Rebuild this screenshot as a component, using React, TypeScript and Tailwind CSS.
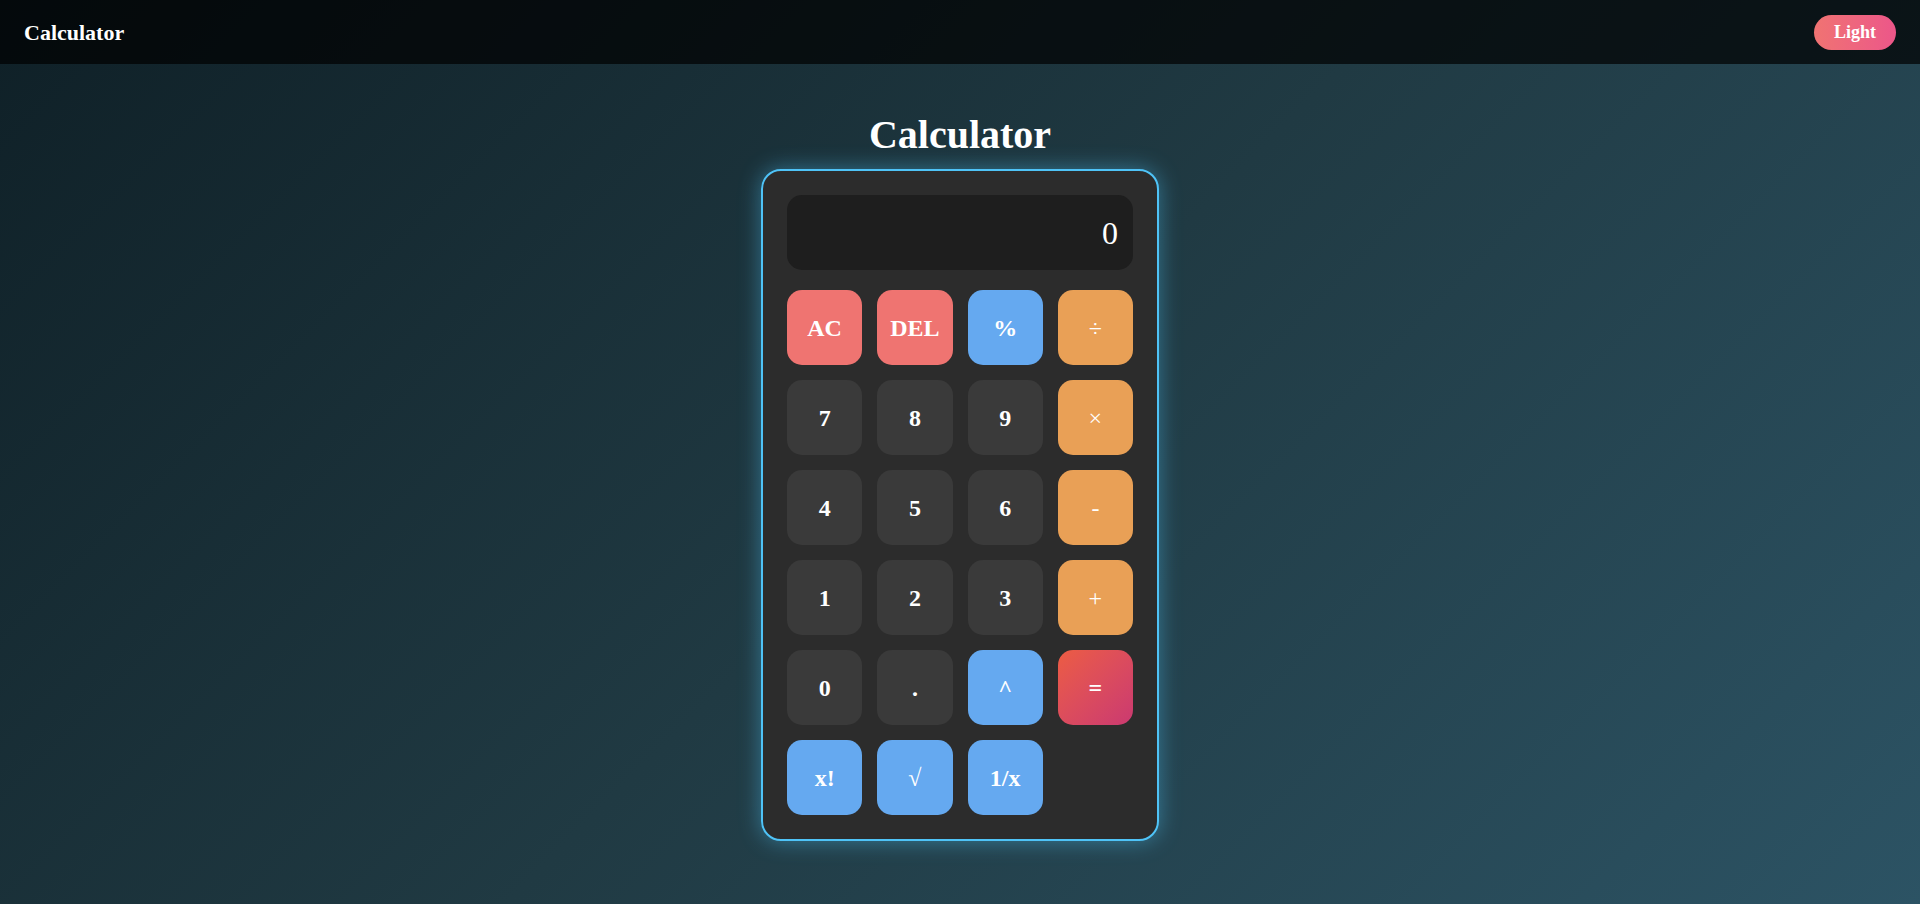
const keys = [
  { label: "AC", kind: "red" },
  { label: "DEL", kind: "red" },
  { label: "%", kind: "blue" },
  { label: "÷", kind: "op" },
  { label: "7", kind: "num" },
  { label: "8", kind: "num" },
  { label: "9", kind: "num" },
  { label: "×", kind: "op" },
  { label: "4", kind: "num" },
  { label: "5", kind: "num" },
  { label: "6", kind: "num" },
  { label: "-", kind: "op" },
  { label: "1", kind: "num" },
  { label: "2", kind: "num" },
  { label: "3", kind: "num" },
  { label: "+", kind: "op" },
  { label: "0", kind: "num" },
  { label: ".", kind: "num" },
  { label: "^", kind: "blue" },
  { label: "=", kind: "eq" },
  { label: "x!", kind: "blue" },
  { label: "√", kind: "blueThin" },
  { label: "1/x", kind: "blue" },
];

const styles: Record<string, string> = {
  red: "bg-[#ef7471] font-bold",
  blue: "bg-[#65a9f0] font-bold",
  blueThin: "bg-[#65a9f0] font-normal",
  op: "bg-[#e9a056] font-normal",
  num: "bg-[#3a3a3a] font-bold",
  eq: "bg-linear-to-br from-[#ec5c42] to-[#cb3970] font-bold",
};

export default function App() {
  return (
    <div className="min-h-screen w-full bg-[linear-gradient(135deg,#0f2027,#203a43,#2c5364)] text-white font-['Liberation_Serif','Times_New_Roman',serif]">
      {/* Navbar */}
      <nav className="h-16 flex items-center justify-between px-6 bg-black/70">
        <span className="text-[22px] font-bold">Calculator</span>
        <button className="rounded-full px-5 py-[7px] text-[18px] leading-[21px] font-bold bg-linear-to-r from-[#f07372] to-[#ec5689] text-white">
          Light
        </button>
      </nav>

      <main className="flex flex-col items-center pt-12 pb-10">
        <h1 className="text-[40px] leading-[46px] font-bold mb-[11px]">Calculator</h1>

        <div className="w-[398px] rounded-[20px] border-2 border-[#4fc3f7] bg-[#2c2c2c] p-6 shadow-[0_0_22px_rgba(79,195,247,0.45)]">
          {/* Display */}
          <div className="h-[75px] rounded-[15px] bg-[#1e1e1e] flex items-center justify-end pr-[15px] text-[32px]">
            0
          </div>

          {/* Keys */}
          <div className="grid grid-cols-4 gap-[15px] mt-5">
            {keys.map((k, i) => (
              <button
                key={i}
                className={`h-[75px] rounded-[15px] text-[24px] text-white flex items-center justify-center ${styles[k.kind]}`}
              >
                {k.label}
              </button>
            ))}
          </div>
        </div>
      </main>
    </div>
  );
}
